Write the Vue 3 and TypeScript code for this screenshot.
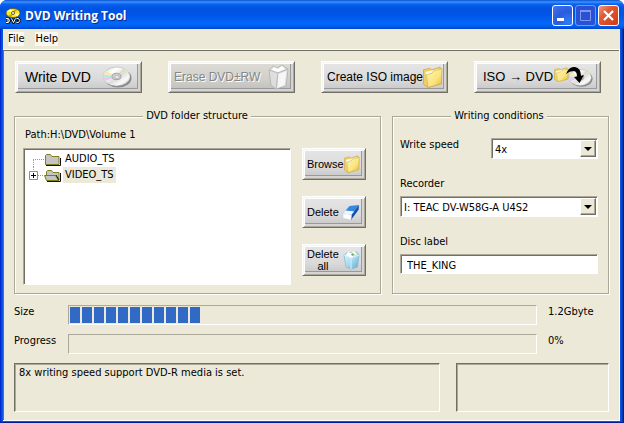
<script setup lang="ts">
import { computed, ref } from 'vue'

const speeds = ['1x', '2x', '4x', '8x']
const recorders = ['I: TEAC DV-W58G-A U4S2']
const speed = ref('4x')
const recorder = ref(recorders[0])
const discLabel = ref('THE_KING')
const sizeGb = ref(1.2)
const progress = ref(0)
const selected = ref('VIDEO_TS')
const sizeBlocks = computed(() => Math.round((sizeGb.value / 4.25) * 39))
</script>

<template>
  <div class="window">
    <header class="titlebar">
      <svg class="app-icon" width="16" height="16" viewBox="0 0 16 16" aria-hidden="true">
        <ellipse cx="8" cy="5" rx="7" ry="4.6" fill="#ffe818" stroke="#5a5200" stroke-width=".7" />
        <path d="M1.500 3.500 6 1l1.500 3zM9 6l5.500-1-2 3.500z" fill="#fffbb0" />
        <path d="m8 5 2-4 2.500 1zM8 5.500 3 8l3 1.500z" fill="#b9a800" />
        <circle cx="8" cy="5" r="1.500" fill="#fff" stroke="#222" stroke-width=".7" />
        <path d="M1 10.500h2.500q2 2 0 4H1M3 11v3M6.500 10.500l2 4 2-4M11.500 10.500h2q2.500 2 0 4h-2M13 11v3" fill="none" stroke="#111" stroke-width="2.600" />
        <path d="M1 10.500h2.500q2 2 0 4H1M3 11v3M6.500 10.500l2 4 2-4M11.500 10.500h2q2.500 2 0 4h-2" fill="none" stroke="#fff" />
      </svg>
      <h1>DVD Writing Tool</h1>
      <div class="controls">
        <button type="button" class="ctl" aria-label="Minimize">
          <svg width="19" height="19" viewBox="0 0 19 19"><path d="M4 12h7v3H4z" fill="#fff" /></svg>
        </button>
        <button type="button" class="ctl dim" aria-label="Maximize" disabled>
          <svg width="19" height="19" viewBox="0 0 19 19"><path d="M4.500 5.500h10v9h-10z" fill="none" stroke="#7f96ea" /><path d="M4 4h11v2H4z" fill="#7f96ea" /></svg>
        </button>
        <button type="button" class="ctl close" aria-label="Close">
          <svg width="19" height="19" viewBox="0 0 19 19"><path d="m5 5 9 9M14 5l-9 9" stroke="#fff" stroke-width="2.200" /></svg>
        </button>
      </div>
    </header>

    <nav class="menu">
      <button type="button">File</button>
      <button type="button">Help</button>
    </nav>

    <main class="client">
      <svg class="defs" width="0" height="0" aria-hidden="true">
        <defs>
          <linearGradient id="yellow" x1="0" y1="0" x2="1" y2="1">
            <stop offset="0" stop-color="#fff6b4" /><stop offset=".6" stop-color="#fae47e" /><stop offset="1" stop-color="#e0b438" />
          </linearGradient>
          <linearGradient id="silver" x1="0" y1="0" x2="1" y2="1">
            <stop offset="0" stop-color="#cfcfcf" /><stop offset=".3" stop-color="#fff" /><stop offset=".55" stop-color="#dedede" /><stop offset=".75" stop-color="#fafafa" /><stop offset="1" stop-color="#b5b5b5" />
          </linearGradient>
          <linearGradient id="water" x1="0" y1="0" x2="1" y2="1">
            <stop offset="0" stop-color="#e4f8ff" /><stop offset=".5" stop-color="#a9dcf0" /><stop offset="1" stop-color="#5fa9cb" />
          </linearGradient>
          <symbol id="folder" viewBox="0 0 20 20">
            <path d="M.5 3.500 7 2l1.500 1.500L17 1l1.500 2v13L5 19.500l-4.500-3z" fill="#f0d066" stroke="#c59c34" stroke-width=".6" />
            <path d="M2.500 5.500 16 2.500V15L5 18z" fill="#fffbe0" />
            <path d="M3.500 8 9 6.500l1.500-2L19 2.500l-.5 13.500-13.500 3.500z" fill="url(#yellow)" stroke="#d3a83a" stroke-width=".6" />
          </symbol>
          <symbol id="disc" viewBox="0 0 30 22">
            <ellipse cx="16" cy="12" rx="13.500" ry="9.500" fill="#888" />
            <ellipse cx="14.500" cy="10.500" rx="13.500" ry="9.500" fill="url(#silver)" stroke="#aaa" stroke-width=".5" />
            <path d="M14.500 10.500 1.500 8q1-2 2.500-3z" fill="#f5eba8" />
            <path d="M14.500 10.500 1.200 8.500l-.1 3z" fill="#b4e9e0" />
            <path d="M14.500 10.500 1.300 11.500 3 15z" fill="#edc5ea" />
            <path d="m14.500 10.500 7-8.500 3 1.500z" fill="#f8cfc4" />
            <path d="m14.500 10.500 10-7 2 2z" fill="#c9efc6" />
            <ellipse cx="14.500" cy="10.500" rx="4.500" ry="3.200" fill="#cfcfcf" stroke="#929292" stroke-width=".8" />
            <ellipse cx="15" cy="11" rx="2.200" ry="1.500" fill="#f0f0f0" stroke="#999" stroke-width=".5" />
          </symbol>
        </defs>
      </svg>

      <div class="toolbar">
        <button type="button" class="push write">
          <span>Write DVD</span>
          <svg width="30" height="22"><use href="#disc" /></svg>
        </button>
        <button type="button" class="push erase" disabled>
          <span>Erase DVD±RW</span>
          <svg width="22" height="26" viewBox="0 0 22 26" aria-hidden="true">
            <path d="m2 6 4-4 4 2 5-3 6 4-2 17-10 3-5-4z" fill="#dedede" stroke="#aaa" stroke-width=".7" />
            <path d="m2 6 9 3 10-4M11 9l-2 16" fill="none" stroke="#b8b8b8" />
            <path d="m5 6 2-3 4 2 4-3 3 3-7 3z" fill="#fff" />
            <path d="m11.500 10 8-3-2 14-7 3z" fill="#f6f6f6" />
          </svg>
        </button>
        <button type="button" class="push create">
          <span>Create ISO image</span>
          <svg width="20" height="22" viewBox="0 0 20 20" preserveAspectRatio="none"><use href="#folder" /></svg>
        </button>
        <button type="button" class="push burn">
          <span>ISO → DVD</span>
          <svg width="40" height="24" viewBox="0 0 40 24" aria-hidden="true">
            <use href="#disc" x="14" y="3" width="25" height="20" />
            <use href="#folder" x="0" y="2" width="15" height="15" />
            <path d="M12 9Q15 1 21 2q6 1 6 9l3-1-4.500 8L20 12l3-.5Q23 6 19.500 6 15.500 6 12 9z" fill="#000" />
          </svg>
        </button>
      </div>

      <div class="groups">
        <fieldset class="structure">
          <legend>DVD folder structure</legend>
          <p class="path">Path:H:\DVD\Volume 1</p>
          <div class="structure-body">
            <ul class="tree">
              <li>
                <svg width="36" height="16" viewBox="0 0 36 16" aria-hidden="true">
                  <path d="M8.500 9v7M8 8.500h11" fill="none" stroke="#999" stroke-dasharray="1 1" />
                  <path d="M20.500 13.500V4.500l1-1h4l1.500 2h7v8z" fill="#c4c4c4" stroke="#808020" />
                  <path d="M21 14.500h14.500V7" fill="none" stroke="#111" />
                </svg>
                <button type="button" :class="{ selected: selected === 'AUDIO_TS' }" @click="selected = 'AUDIO_TS'">AUDIO_TS</button>
              </li>
              <li>
                <svg width="36" height="16" viewBox="0 0 36 16" aria-hidden="true">
                  <path d="M8.500 0v4M13 8.500h6" fill="none" stroke="#999" stroke-dasharray="1 1" />
                  <path d="M4.500 4.500h8v8h-8z" fill="#fff" stroke="#8c8c8c" />
                  <path d="M6 8.500h5M8.500 6v5" stroke="#000" />
                  <path d="M21.500 12.500v-8l1-1h4l1.500 2h6v8z" fill="#c4c4c4" stroke="#808020" />
                  <path d="M19.500 8.500h11l3 5h-12z" fill="#c4c4c4" stroke="#808000" />
                  <path d="M22 14.500h13.500V6M31 8l3 5" fill="none" stroke="#111" />
                </svg>
                <button type="button" :class="{ selected: selected === 'VIDEO_TS' }" @click="selected = 'VIDEO_TS'">VIDEO_TS</button>
              </li>
            </ul>
            <div class="side">
              <button type="button" class="push small">
                <span>Browse</span>
                <svg width="16" height="18" viewBox="0 0 20 20" preserveAspectRatio="none"><use href="#folder" /></svg>
              </button>
              <button type="button" class="push small">
                <span>Delete</span>
                <svg width="18" height="17" viewBox="0 0 19 18" aria-hidden="true">
                  <path d="M8 2 18 1l-8 10-9-1z" fill="#3589e4" />
                  <path d="m18 1-.5 5-8 11 .5-6z" fill="#1150a8" />
                  <path d="m1 10 9 1-.5 6L1 15z" fill="#fff" stroke="#bcd" stroke-width=".5" />
                  <path d="m1 10 2.500-3 9.500 1-3 3z" fill="#eef6ff" />
                </svg>
              </button>
              <button type="button" class="push small">
                <span>Delete<br />all</span>
                <svg width="17" height="20" viewBox="0 0 17 20" aria-hidden="true">
                  <path d="m1 5 3-2 10-1 2 3-1.500 12L8 19l-5-2z" fill="url(#water)" stroke="#79b6d0" stroke-width=".7" />
                  <path d="m3 5 2-3 3 1 3-2 3 3-6 4z" fill="#fff" />
                  <path d="m8 4 2-1 2 2-3 1z" fill="#78b860" />
                  <path d="m1 5 7 3 8-3M8 8v11" fill="none" stroke="#d8f3fc" />
                </svg>
              </button>
            </div>
          </div>
        </fieldset>

        <fieldset class="conditions">
          <legend>Writing conditions</legend>
          <div class="speed">
            <label for="speed">Write speed</label>
            <div class="combo">
              <select id="speed" v-model="speed">
                <option v-for="s in speeds" :key="s">{{ s }}</option>
              </select>
              <span class="drop" aria-hidden="true"><svg width="8" height="4" viewBox="0 0 8 4"><path d="M0 0h8L4 4z" /></svg></span>
            </div>
          </div>
          <div class="field">
            <label for="recorder">Recorder</label>
            <div class="combo">
              <select id="recorder" v-model="recorder">
                <option v-for="r in recorders" :key="r">{{ r }}</option>
              </select>
              <span class="drop" aria-hidden="true"><svg width="8" height="4" viewBox="0 0 8 4"><path d="M0 0h8L4 4z" /></svg></span>
            </div>
          </div>
          <div class="field">
            <label for="disc-label">Disc label</label>
            <input id="disc-label" v-model="discLabel" type="text" />
          </div>
        </fieldset>
      </div>

      <div class="meters">
        <span id="size-label">Size</span>
        <div class="bar" role="progressbar" aria-labelledby="size-label" :aria-valuenow="sizeGb">
          <i v-for="n in sizeBlocks" :key="n"></i>
        </div>
        <span>{{ sizeGb }}Gbyte</span>
        <span id="progress-label">Progress</span>
        <div class="bar" role="progressbar" aria-labelledby="progress-label" :aria-valuenow="progress"></div>
        <span>{{ progress }}%</span>
      </div>

      <footer class="status">
        <div class="panel message">8x writing speed support DVD-R media is set.</div>
        <div class="panel"></div>
      </footer>
    </main>
  </div>
</template>

<style>
body {
  background: #fff;
}
</style>

<style scoped>
* {
  box-sizing: border-box;
}
.window {
  display: flex;
  flex-direction: column;
  min-height: 100vh;
  padding: 0 4px 3px 3px;
  border-radius: 7px 7px 0 0;
  background: linear-gradient(90deg, #0019cf, #0855dd 2px, #0855dd calc(100% - 3px), #00138c);
  box-shadow: inset 0 -2px 0 #001ea0;
  color: #000;
  font: 11px/14px 'DejaVu Sans Condensed', 'DejaVu Sans', sans-serif;
}
button,
input,
select {
  margin: 0;
  padding: 0;
  border: 0;
  border-radius: 0;
  background: none;
  color: inherit;
  font: inherit;
}
.titlebar {
  display: flex;
  align-items: center;
  height: 29px;
  margin: 0 -4px 0 -3px;
  padding: 2px 5px 0 5px;
  border-radius: 7px 7px 0 0;
  background: linear-gradient(#0a50d0 0, #3a93ff 2px, #0a62ee 4px, #0054e3 8px, #0055e5 15px, #0366fb 23px, #0262ee 26px, #0043cf 29px);
}
h1 {
  flex: 1;
  margin: 0 0 0 4px;
  color: #fff;
  font: bold 12px/18px 'Open Sans', sans-serif;
  text-shadow: 1px 1px 0 #0a2a8c;
}
.controls {
  display: flex;
  gap: 2px;
}
.ctl {
  width: 21px;
  height: 21px;
  border: 1px solid #fff;
  border-radius: 3px;
  background: radial-gradient(circle at 80% 85%, #2f7bf5, #2a5bdf 50%, #4774e8);
}
.ctl svg {
  display: block;
}
.ctl.dim {
  border-color: #7f96ea;
  background: #2752d8;
}
.ctl.close {
  background: linear-gradient(135deg, #f09a80, #e25a35 35%, #d03b12);
}
.menu {
  display: flex;
  gap: 11px;
  height: 21px;
  padding: 3px 5px 2px;
  border-bottom: 1px solid #fff;
  background: #ece9d8;
}
.menu button {
  height: 14px;
  background: #faf8f0;
}
.client {
  flex: 1;
  display: flex;
  flex-direction: column;
  padding: 11px 10px 8px 11px;
  border: solid #fff;
  border-width: 0 1px 1px 0;
  background: #ece9d8;
  box-shadow: inset 1px 1px 0 #716f64;
}
.defs {
  position: absolute;
}
.toolbar {
  display: flex;
  justify-content: space-between;
  margin: 0 8px 16px 1px;
}
.push {
  display: flex;
  align-items: center;
  justify-content: space-between;
  width: 127px;
  height: 32px;
  padding: 0 7px;
  border: 1px solid;
  border-color: #fff #716f64 #716f64 #fff;
  background: linear-gradient(#e6e6e6, #dadada 60%, #c4c4c4);
  box-shadow: inset 1px 1px 0 #f4f4f4, inset -1px -1px 0 #aca899, inset 2px 2px 0 #fff, inset -3px -3px 0 #d4d4d4, inset -4px -4px 0 #999;
  font-family: 'Liberation Sans', sans-serif;
  white-space: nowrap;
}
.push svg {
  flex: none;
}
.push.write {
  padding: 0 9px;
  font-size: 14px;
}
.push.create {
  padding: 0 6px 0 5px;
  font-size: 12px;
}
.push.burn {
  padding: 0 6px 0 8px;
  font-size: 13px;
}
.push.erase {
  padding: 0 5px;
  background: linear-gradient(#dddcd7, #cfcec8 60%, #bdbcb7);
  color: #858585;
  font-size: 12px;
  text-shadow: 1px 1px 0 #fff;
}
.push.small {
  width: 64px;
  padding: 0 5px 0 4px;
  font-size: 11px;
  line-height: 12px;
}
.groups {
  display: grid;
  grid-template-columns: 367fr 217fr;
  gap: 11px;
}
fieldset {
  min-width: 0;
  margin: 0;
  padding: 0 9px 8px 8px;
  border: 1px solid #aca899;
  box-shadow: 1px 1px 0 #fff, inset 1px 1px 0 #fff;
}
legend {
  margin: 0 auto;
  padding: 0 3px;
  background: #ece9d8;
}
.path {
  margin: 5px 0 6px 2px;
}
.structure-body {
  display: flex;
  gap: 11px;
}
.tree,
.combo,
.field input {
  border: 1px solid;
  border-color: #aca899 #fff #fff #aca899;
  background: #fff;
  box-shadow: inset 1px 1px 0 #716f64;
}
.tree {
  flex: 1;
  min-height: 137px;
  margin: 0;
  padding: 2px 1px;
  list-style: none;
}
.tree li {
  display: flex;
  gap: 2px;
  height: 16px;
}
.tree button {
  height: 16px;
  padding: 0 2px;
}
.tree .selected {
  background: #ece9d8;
}
.side {
  display: flex;
  flex-direction: column;
  gap: 16px;
  margin-right: 5px;
}
.conditions {
  padding: 0 10px 8px 7px;
}
.speed {
  display: flex;
  justify-content: space-between;
  margin-top: 15px;
}
.speed .combo {
  width: 107px;
}
.combo {
  position: relative;
  height: 21px;
}
.combo select {
  display: block;
  width: 100%;
  height: 19px;
  padding: 2px 20px 0 3px;
  appearance: none;
  outline: 0;
}
.drop {
  position: absolute;
  top: 1px;
  right: 1px;
  display: grid;
  place-items: center;
  width: 16px;
  height: 17px;
  border: 1px solid;
  border-color: #fff #716f64 #716f64 #fff;
  background: #ece9d8;
  box-shadow: inset -1px -1px 0 #aca899;
  pointer-events: none;
}
.field {
  display: grid;
  gap: 5px;
  margin-top: 18px;
}
.field input {
  width: 100%;
  height: 20px;
  padding: 2px 6px 0;
  outline: 0;
}
.meters {
  display: grid;
  grid-template-columns: 43px 1fr 61px;
  gap: 9px 11px;
  margin-top: 11px;
}
.bar {
  display: flex;
  gap: 2px;
  height: 20px;
  padding: 1px;
  border: 1px solid;
  border-color: #aca899 #fff #fff #aca899;
}
.bar i {
  width: 10px;
  background: #316ac5;
}
.status {
  flex: 1;
  display: grid;
  grid-template-columns: 425fr 153fr;
  gap: 16px;
  min-height: 49px;
  margin-top: 9px;
}
.panel {
  padding: 2px 4px;
  border: 1px solid;
  border-color: #716f64 #fff #fff #716f64;
  box-shadow: inset 1px 1px 0 #aca899;
}
</style>
